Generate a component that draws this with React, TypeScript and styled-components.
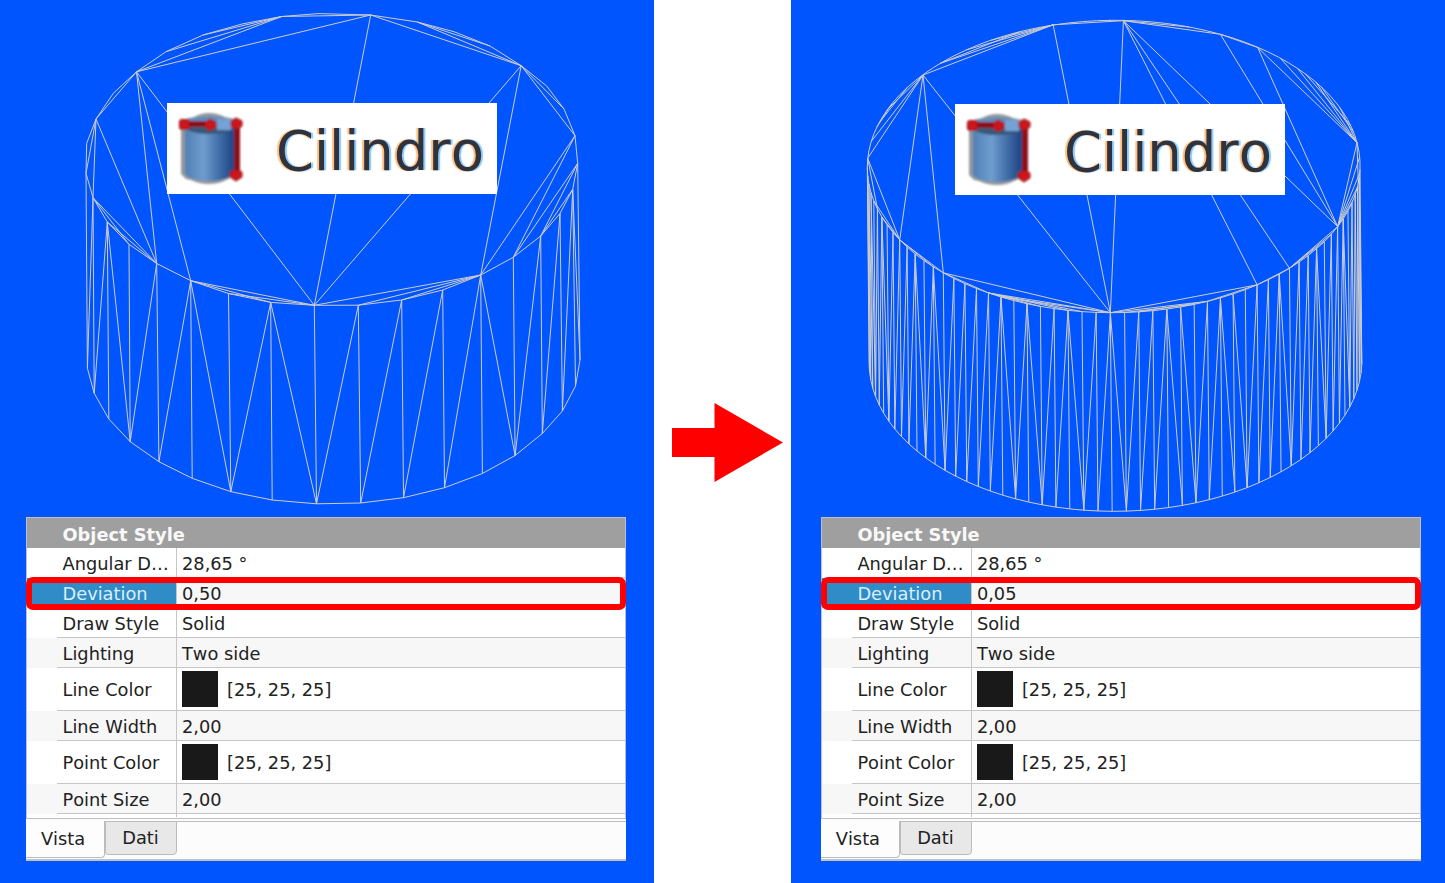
import React from "react";
import styled, { createGlobalStyle } from "styled-components";

const GlobalStyle = createGlobalStyle`
  * { box-sizing: border-box; }
  body {
    margin: 0;
    background: #fff;
    font-family: "DejaVu Sans", sans-serif;
    font-kerning: none;
  }
`;

const Page = styled.main`
  display: flex;
  width: 1445px;
  height: 883px;
  overflow: hidden;
`;

const Viewport = styled.section<{ $inset: number }>`
  position: relative;
  flex: 0 0 654px;
  height: 883px;
  padding-left: ${(p) => p.$inset}px;
  background: #0055ff;
  overflow: hidden;
`;

const Scene = styled.svg<{ $inset: number }>`
  display: block;
  width: 654px;
  height: 517px;
  margin-left: -${(p) => p.$inset}px;
`;

const Gap = styled.div`
  flex: 0 0 137.4px;
  display: flex;
  align-items: flex-start;
  padding: 403px 0 0 18px;
`;

const ObjectLabel = styled.div<{ $left: number; $top: number }>`
  position: absolute;
  left: ${(p) => p.$left}px;
  top: ${(p) => p.$top}px;
  width: 330px;
  height: 90.5px;
  padding-left: 9px;
  display: flex;
  align-items: center;
  background: #fff;
`;

const LabelText = styled.span`
  margin-left: 30px;
  padding-top: 8px;
  font-size: 54.4px;
  line-height: 60px;
  color: #30323c;
  text-shadow: -2px 0 1px rgba(255, 150, 50, 0.65), 2px 0 1px rgba(70, 170, 255, 0.65);
`;

const Panel = styled.div`
  width: 600px;
  height: 344px;
  display: flex;
  flex-direction: column;
  background: #fcfcfc;
  border-bottom: 2px solid #c2c2c2;
  font-size: 17.8px;
  color: #222;
`;

const Table = styled.div`
  height: 302px;
  border: 1.5px solid #c0c0c0;
  border-right-width: 1px;
  background: #fff;
`;

const GroupHeader = styled.div`
  height: 30px;
  padding-left: 35.5px;
  line-height: 33px;
  font-weight: bold;
  color: #f8f8f8;
  background: #9f9f9f;
`;

const Row = styled.div<{ $height: number; $alt?: boolean; $clipped?: boolean }>`
  position: relative;
  display: flex;
  height: ${(p) => p.$height}px;
  padding-left: 30px;
  background: ${(p) => (p.$alt ? "#f7f7f7" : "#fff")};
  overflow: ${(p) => (p.$clipped ? "hidden" : "visible")};
  > div { min-height: ${(p) => (p.$clipped ? "12px" : "0")}; }
`;

const NameCell = styled.div<{ $selected?: boolean }>`
  display: flex;
  align-items: center;
  margin-left: ${(p) => (p.$selected ? "-30px" : "0")};
  flex: 0 0 ${(p) => (p.$selected ? "150px" : "120px")};
  padding-left: ${(p) => (p.$selected ? "35.5px" : "5.5px")};
  padding-top: 2px;
  border-right: 1.5px solid #c6c6c6;
  border-bottom: 1.5px solid #c6c6c6;
  color: ${(p) => (p.$selected ? "#dceefa" : "inherit")};
  background: ${(p) => (p.$selected ? "#308cc6" : "transparent")};
  white-space: pre;
`;

const ValueCell = styled.div`
  flex: 1;
  display: flex;
  align-items: center;
  gap: 9px;
  padding-left: 5px;
  padding-top: 2px;
  border-bottom: 1.5px solid #c6c6c6;
  white-space: pre;
`;

const Swatch = styled.span`
  width: 36px;
  height: 36px;
  margin-top: -2px;
  background: #191919;
`;

const Highlight = styled.div`
  position: absolute;
  left: -1px;
  top: -1px;
  width: 600px;
  height: 33px;
  border: 6px solid #ff0000;
  border-radius: 7px;
  z-index: 1;
`;

const TabBar = styled.div`
  flex: 1;
  display: flex;
  align-items: flex-start;
  margin-top: 2px;
`;

const Tab = styled.div<{ $active?: boolean }>`
  width: ${(p) => (p.$active ? 79 : 72)}px;
  height: ${(p) => (p.$active ? 36.5 : 34)}px;
  line-height: ${(p) => (p.$active ? 36 : 31)}px;
  text-align: center;
  padding-right: ${(p) => (p.$active ? 4 : 1)}px;
  background: ${(p) => (p.$active ? "#fdfdfd" : "#e8e8e8")};
  border: 1.5px solid #bcbcbc;
  border-left-width: ${(p) => (p.$active ? 0 : 1)}px;
  border-top-width: ${(p) => (p.$active ? 0 : 1.5)}px;
  border-radius: 0 0 4px ${(p) => (p.$active ? 0 : 3)}px;
`;

const TabRest = styled.div`
  flex: 1;
  border-top: 1.5px solid #bcbcbc;
`;

type Pt = [number, number];
const seg = (a: Pt, b: Pt) => `M${a[0].toFixed(2)} ${a[1].toFixed(2)}L${b[0].toFixed(2)} ${b[1].toFixed(2)}`;
const chain = (pts: Pt[]) => "M" + pts.map((p) => `${p[0].toFixed(2)} ${p[1].toFixed(2)}`).join("L");

/* Coarse mesh: front rim, front base and back rim vertices */
const ct: Pt[] = [
  [86, 173.3], [93, 197.7], [107.3, 222], [129, 244.3], [156.7, 263.5], [190.7, 280.7], [228.5, 293.5],
  [270.7, 302.4], [314.3, 305.3], [358.3, 305.2], [401.7, 300], [442.7, 290], [480.7, 275], [513.3, 257.3],
  [540.7, 236], [560, 213.5], [572.7, 189.3], [577.7, 163.3],
];
const cb: Pt[] = [
  [87.4, 368.3], [94.2, 393.3], [108.8, 419], [130.2, 441.7], [158.9, 461.7], [192.2, 478.3], [230.8, 491.7],
  [272.2, 500], [316.5, 503.8], [360.7, 503], [403.5, 497.7], [444.5, 487.7], [482.4, 473.5], [515.1, 455.5],
  [542.3, 433.5], [562.4, 411], [575.5, 386], [580, 360],
];
const cr: Pt[] = [
  [86, 173.3], [86.7, 143.3], [96, 119], [113.3, 93.3], [136.5, 71.8], [166, 51.7], [203, 35], [242, 24],
  [281.7, 16.5], [318, 13.6], [370.7, 15], [417.3, 22], [454, 31.7], [490, 46], [521.2, 65.7], [546.7, 86],
  [564, 109], [575, 135.7], [577.7, 163.3],
];
const coarse = [
  chain(ct), chain(cb), chain(cr),
  ...ct.map((p, i) => seg(p, cb[i])),
  ...[[1, 0], [2, 1], [2, 3], [4, 3], [5, 4], [5, 6], [7, 6], [7, 8], [9, 8], [10, 9], [11, 10], [12, 11],
    [12, 13], [14, 13], [15, 14], [16, 15], [16, 17]].map(([a, b]) => seg(ct[a], cb[b])),
  ...[[4, 2], [4, 8], [4, 10], [5, 8], [6, 8], [8, 10], [10, 14], [11, 14], [11, 13], [14, 16], [14, 17]]
    .map(([a, b]) => seg(cr[a], cr[b])),
  ...[[4, 8], [4, 5], [4, 4], [2, 4], [2, 1], [2, 0], [10, 8], [14, 8], [14, 12], [17, 12], [17, 13]]
    .map(([a, b]) => seg(cr[a], ct[b])),
  ...[[1, 4], [1, 3], [2, 4], [17, 13], [17, 14], [16, 14], [5, 8], [5, 7], [6, 8], [12, 8], [12, 9], [12, 10]]
    .map(([a, b]) => seg(ct[a], ct[b])),
].join("");

/* Fine mesh: rim sampled by angle, with the base following the rim */
const rim = (phi: number): Pt => [
  322.7 + 246.4 * Math.sin(phi),
  166.5 + 146.2 * Math.cos(phi) - Math.sin(phi),
];
const ft = (k: number): Pt => rim(-0.0135 + 0.0577 * k);
const fb = (k: number): Pt => {
  const [x, y] = ft(k);
  return [x + 1.8, y + 195 + 3.6 * Math.cos(-0.0135 + 0.0577 * k)];
};
const range = (a: number, b: number) => Array.from({ length: b - a + 1 }, (_, i) => a + i);
const A: Pt = [132, 75];
const B: Pt = [262.2, 24.8];
const C: Pt = [332.4, 20.7];
const D: Pt = [429.4, 34.3];
const E: Pt = [466.7, 47.5];
const F: Pt = [566, 142.7];
const L: Pt = [76.7, 158.3];
const diagonals: [number, number][] = [
  [0, -1], [-1, -2], [-3, -2], [-3, -4], [-4, -5], [-6, -5], [-6, -7], [-8, -7], [-8, -9], [-9, -10], [-10, -11],
  [-11, -12], [-12, -13], [-14, -13], [-14, -15], [-16, -15], [-16, -17], [-17, -18], [-18, -19], [-19, -20],
  [-21, -20], [-21, -22], [-22, -23], [-24, -23], [-25, -24], [-26, -25],
  [0, 1], [2, 1], [3, 2], [4, 3], [4, 5], [5, 6], [7, 6], [8, 7], [8, 9], [9, 10], [11, 10], [12, 11], [13, 12],
  [13, 14], [15, 14], [16, 15], [17, 16], [17, 18], [19, 18], [20, 19], [21, 20], [21, 22], [23, 22], [24, 23],
  [25, 24], [26, 25], [26, 27],
];
const fine = [
  chain(range(-54, 55).map(ft)),
  chain(range(-27, 27).map(fb)),
  ...range(-27, 27).map((k) => seg(ft(k), fb(k))),
  ...diagonals.map(([a, b]) => seg(ft(a), fb(b))),
  ...([
    [A, L], [A, rim(-1.75)], [A, rim(-1.98)], [rim(-2.02), rim(-1.85)], [rim(-2.15), rim(-1.88)],
    [A, ft(-18)], [A, ft(-13)], [A, ft(0)], [A, B],
    [rim(-2.36), B], [rim(-2.36), rim(-2.75)], [rim(-2.5), B], [rim(-2.62), B],
    [B, C], [B, ft(0)], [C, ft(0)], [C, ft(11)], [C, ft(14)], [C, ft(20)], [C, D], [C, rim(2.83)],
    [D, E], [D, ft(20)], [E, ft(20)], [E, F], [rim(2.4), F], [rim(2.3), F], [rim(2.18), F],
    [rim(2.25), rim(1.85)], [rim(2.14), rim(1.8)], [rim(1.98), F], [F, ft(20)], [rim(1.63), ft(20)],
    [rim(1.52), ft(20)], [rim(1.42), ft(20)], [rim(1.33), ft(20)], [F, rim(1.45)],
    [ft(20), ft(14)], [ft(19), ft(14)], [ft(18), ft(14)], [ft(14), ft(11)], [ft(11), ft(0)], [ft(11), ft(7)],
    [ft(7), ft(0)], [ft(7), ft(2)], [ft(6), ft(1)], [ft(0), ft(-13)], [ft(0), ft(-9)], [ft(0), ft(-8)],
    [ft(-2), ft(-9)], [ft(-3), ft(-9)], [ft(-9), ft(-5)], [ft(-13), ft(-18)], [ft(-14), ft(-18)],
    [ft(-13), ft(-9)], [L, ft(-18)], [L, ft(-22)], [ft(-23), ft(-18)], [ft(-21), ft(-18)],
  ] as [Pt, Pt][]).map(([a, b]) => seg(a, b)),
].join("");

const CylinderIcon = ({ id }: { id: string }) => (
  <svg width="70" height="80" viewBox="0 0 70 80">
    <defs>
      <linearGradient id={`body-${id}`}>
        <stop offset="0" stopColor="#4f7fb5" />
        <stop offset="0.38" stopColor="#6f9dcf" />
        <stop offset="0.65" stopColor="#4675ae" />
        <stop offset="1" stopColor="#1c4382" />
      </linearGradient>
      <filter id={`soft-${id}`} x="-10%" y="-10%" width="120%" height="120%">
        <feGaussianBlur stdDeviation="1.2" />
      </filter>
    </defs>
    <g filter={`url(#soft-${id})`}>
      <path d="M5 12 18 9Q25 5 33 5t16 4l10 2v57l-9 4Q43 76 33 76T15 72L10 71 5 66Z" fill="#92979c" />
      <path d="M9 20v46l5 4q9 3 19 3t18-3l7-3V20Z" fill={`url(#body-${id})`} />
      <path d="M10 11 19 10q14-3 28 0l10 2v9H10Z" fill="#5c8bbd" />
      <path d="M10 18h47v4q-8 4-24 4t-23-5Z" fill="#3b5878" />
      <path d="M41 11h14v11H41Z" fill="#75a2d6" />
      <path d="M9 16h26M61 15v50" stroke="#8e1018" strokeWidth="6" />
      <g fill="#cb171d" stroke="#901018" strokeWidth="1">
        <rect x="3.5" y="11.5" width="10" height="10" rx="2" />
        <path d="m34 11 6 3v5l-6 4-5-4v-5ZM60 10l6 3v5l-6 4-5-4v-5ZM60 61l6 3v5l-6 4-6-4v-5Z" />
      </g>
    </g>
  </svg>
);

interface RowData {
  name: string;
  value: string;
  height: number;
  alt?: boolean;
  selected?: boolean;
  swatch?: boolean;
  clipped?: boolean;
}

const makeRows = (deviation: string): RowData[] => [
  { name: "Angular D…", value: "28,65 °", height: 30 },
  { name: "Deviation", value: deviation, height: 30, alt: true, selected: true },
  { name: "Draw Style", value: "Solid", height: 29.5 },
  { name: "Lighting", value: "Two side", height: 30, alt: true },
  { name: "Line Color", value: "[25, 25, 25]", height: 43.2, swatch: true },
  { name: "Line Width", value: "2,00", height: 30, alt: true },
  { name: "Point Color", value: "[25, 25, 25]", height: 43.3, swatch: true },
  { name: "Point Size", value: "2,00", height: 30, alt: true },
  { name: "", value: "", height: 3.5, clipped: true },
];

const PropertyPanel = ({ deviation }: { deviation: string }) => (
  <Panel>
    <Table>
      <GroupHeader>Object Style</GroupHeader>
      {makeRows(deviation).map((r, i) => (
        <Row key={i} $height={r.height} $alt={r.alt} $clipped={r.clipped}>
          <NameCell $selected={r.selected}>{r.name}</NameCell>
          <ValueCell>
            {r.swatch && <Swatch />}
            {r.value}
          </ValueCell>
          {r.selected && <Highlight />}
        </Row>
      ))}
    </Table>
    <TabBar>
      <Tab $active>Vista</Tab>
      <Tab>Dati</Tab>
      <TabRest />
    </TabBar>
  </Panel>
);

interface ViewProps {
  id: string;
  mesh: string;
  inset: number;
  labelX: number;
  labelY: number;
  deviation: string;
}

const CylinderView = ({ id, mesh, inset, labelX, labelY, deviation }: ViewProps) => (
  <Viewport $inset={inset}>
    <Scene $inset={inset} viewBox="0 0 654 517">
      <path d={mesh} fill="none" stroke="#cccccc" strokeWidth="1" />
    </Scene>
    <ObjectLabel $left={labelX} $top={labelY}>
      <CylinderIcon id={id} />
      <LabelText>Cilindro</LabelText>
    </ObjectLabel>
    <PropertyPanel deviation={deviation} />
  </Viewport>
);

export default function App() {
  return (
    <Page>
      <GlobalStyle />
      <CylinderView id="coarse" mesh={coarse} inset={26} labelX={167} labelY={103} deviation="0,50" />
      <Gap>
        <svg width="112" height="80" viewBox="0 0 112 80">
          <path d="M0 25h42.5V0L111 39.5 42.5 79V54H0Z" fill="#ff0000" />
        </svg>
      </Gap>
      <CylinderView id="fine" mesh={fine} inset={29.5} labelX={163.6} labelY={104} deviation="0,05" />
    </Page>
  );
}
